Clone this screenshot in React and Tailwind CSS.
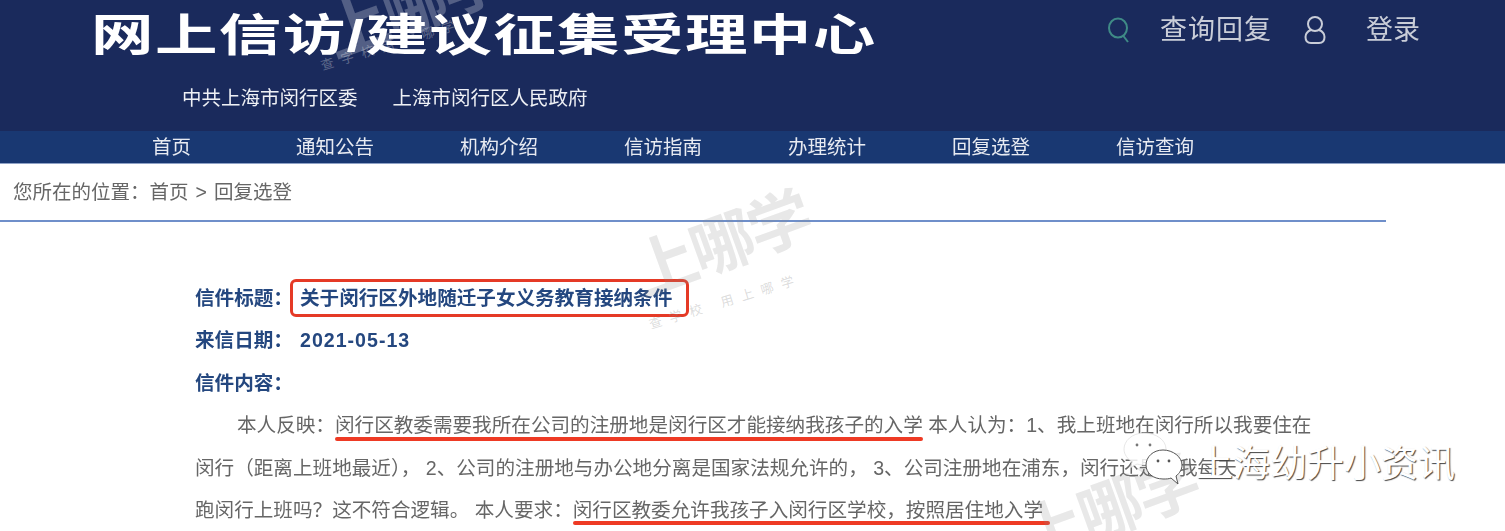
const cjk = "font-['Liberation_Sans','Noto_Sans_CJK_SC',sans-serif]";

function Mark({ className }) {
  return (
    <div className={"absolute pointer-events-none select-none leading-none font-bold whitespace-nowrap -rotate-[20deg] text-[64px] tracking-[-3px] " + className}>
      上哪学
    </div>
  );
}

function SmallMark({ className, children }) {
  return (
    <div className={"absolute pointer-events-none select-none leading-none whitespace-nowrap -rotate-[17deg] text-[13px] tracking-[8px] " + className}>
      {children}
    </div>
  );
}

const navItems = ["通知公告", "机构介绍", "信访指南", "办理统计", "回复选登", "信访查询"];

export default function App() {
  return (
    <div className={"relative w-[1505px] h-[531px] overflow-hidden bg-white " + cjk}>
      <div className="blur-[0.7px]">
        <header className="h-[131px] bg-[#1a2a5c] relative">
          <div className="flex items-start justify-between h-[77px]">
            <h1 className="ml-[91px] mt-[8px] text-[44px] leading-[56px] font-bold text-white whitespace-nowrap origin-left scale-x-[1.42] tracking-[1px]">
              网上信访/建议征集受理中心
            </h1>
            <div className="flex items-center h-[60px] text-[#c9cdd8] text-[27px] leading-none mr-[85px]">
              <svg width="26" height="26" viewBox="0 0 26 26" fill="none" stroke="#3f8a86" strokeWidth="2" className="mr-[27px]">
                <ellipse cx="11" cy="11" rx="9" ry="9.5" />
                <path d="M16 18.5 L21 25" />
              </svg>
              <span className="tracking-[1px]">查询回复</span>
              <svg width="22" height="28" viewBox="0 0 22 28" fill="none" stroke="#c9cdd8" strokeWidth="2" className="ml-[32px] mr-[40px]">
                <ellipse cx="11" cy="8" rx="7" ry="7" />
                <path d="M7 14 C3 15.5 1.5 18 1.5 21 C1.5 25 4 27 7 27 H15 C18 27 20.5 25 20.5 21 C20.5 18 19 15.5 15 14" />
              </svg>
              <span>登录</span>
            </div>
          </div>
          <div className="flex pl-[182px] gap-[35px] text-[19.5px] leading-[42px] text-[#eef0f5]">
            <span>中共上海市闵行区委</span>
            <span>上海市闵行区人民政府</span>
          </div>
        </header>

        <nav className="h-[33px] pt-[2px] bg-[#193872] border-b border-[#8fa2c6] flex pl-[152px] items-center text-[19.5px] text-[#e8ebf2] leading-none">
          <span className="w-[144px]">首页</span>
          {navItems.map((t) => (
            <span key={t} className="w-[164px]">{t}</span>
          ))}
        </nav>

        <div className="h-[56px] pt-[2px] flex items-center pl-[13px] text-[19.5px] text-[#666666]">
          <span>您所在的位置：</span>
          <span>首页</span>
          <span className="mx-[7px]">&gt;</span>
          <span>回复选登</span>
        </div>
        <div className="w-[1386px] h-[2px] bg-[#6f8fca]" />

        <main className="pl-[195px] pt-[55px] text-[19.6px] leading-[42.4px] whitespace-nowrap">
          <div className="flex text-[#24477f] font-bold">
            <span className="w-[105px]">信件标题：</span>
            <span className="relative">
              关于闵行区外地随迁子女义务教育接纳条件
              <span className="absolute left-[-10px] top-[2px] w-[399px] h-[38px] border-[3px] border-[#e53a26] rounded-[6px]" />
            </span>
          </div>
          <div className="flex text-[#24477f] font-bold">
            <span className="w-[105px]">来信日期：</span>
            <span className="font-bold tracking-[1px]">2021-05-13</span>
          </div>
          <div className="text-[#24477f] font-bold">信件内容：</div>
          <div className="text-[#666666]">
            <div className="pl-[42px]">
              本人反映：
              <span className="relative">
                闵行区教委需要我所在公司的注册地是闵行区才能接纳我孩子的入学
                <span className="absolute left-0 right-0 bottom-[-5px] h-[4px] rounded-full bg-[#ee3a24]" />
              </span>
              {" "}本人认为：1、我上班地在闵行所以我要住在
            </div>
            <div>闵行（距离上班地最近）， 2、公司的注册地与办公地分离是国家法规允许的， 3、公司注册地在浦东，闵行还是要我每天</div>
            <div>
              跑闵行上班吗？这不符合逻辑。 本人要求：
              <span className="relative">
                闵行区教委允许我孩子入闵行区学校，按照居住地入学
                <span className="absolute left-0 right-[-7px] bottom-[-4px] h-[4px] rounded-full bg-[#ee3a24]" />
              </span>
            </div>
          </div>
        </main>
      </div>

      <Mark className="left-[630px] top-[213px] text-[#8a8a8a]/20" />
      <Mark className="left-[322px] top-[-26px] text-white/25" />
      <Mark className="left-[1018px] top-[478px] text-[#8a8a8a]/20" />
      <SmallMark className="left-[318px] top-[38px] text-white/30">查字校用上哪学</SmallMark>
      <SmallMark className="left-[646px] top-[295px] text-[#8a8a8a]/30">查学校 用上哪学</SmallMark>

      <svg width="70" height="56" viewBox="0 0 70 56" className="absolute left-[1122px] top-[432px]">
        <path d="M22 1 C10 1 2 9 2 17 C2 23 6 27 10 30 L8 36 L15 32 C18 33 22 33 25 33 C37 33 44 26 44 17 C44 8 34 1 22 1 Z" fill="#ffffff" fillOpacity="0.85" stroke="#dddddd" strokeWidth="0.7" />
        <circle cx="15" cy="13" r="1.4" fill="#777777" />
        <circle cx="28" cy="13" r="1.4" fill="#777777" />
        <path d="M41 18 C31 18 24 25 24 33 C24 41 31 47 41 47 C44 47 47 47 49 46 L56 52 L54 44 C58 41 60 37 60 33 C60 25 51 18 41 18 Z" fill="#ffffff" stroke="#555555" strokeWidth="1" />
        <circle cx="36" cy="29" r="1.4" fill="#555555" />
        <circle cx="47" cy="29" r="1.4" fill="#555555" />
      </svg>
      <div className="absolute left-[1196px] top-[441px] text-[37px] leading-[48px] text-white whitespace-nowrap [text-shadow:1px_1px_1px_#444444]">
        上海幼升小资讯
      </div>
    </div>
  );
}
